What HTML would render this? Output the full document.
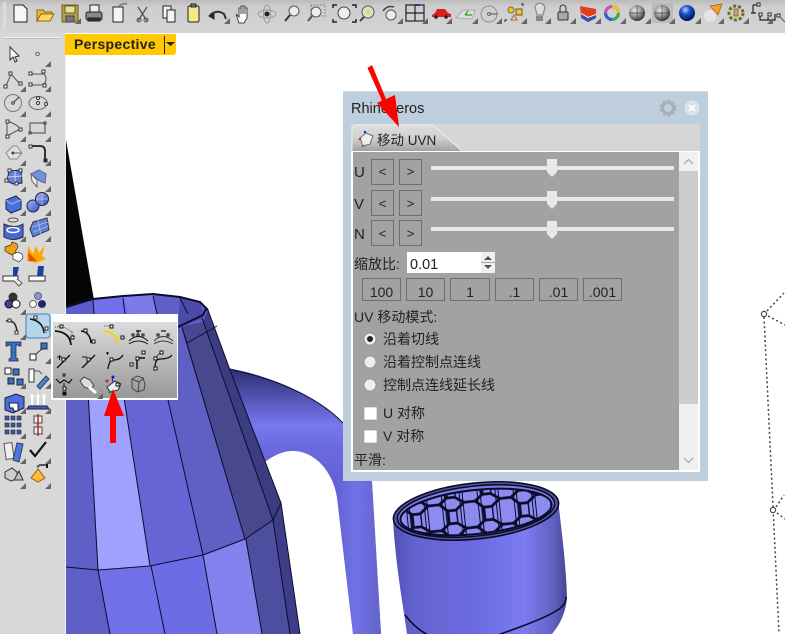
<!DOCTYPE html>
<html><head><meta charset="utf-8"><style>
html,body{margin:0;padding:0;background:#fff;width:785px;height:634px;overflow:hidden}
svg{display:block;position:absolute;left:0;top:0;filter:blur(.35px)}
text{font-family:"Liberation Sans","Noto Sans CJK SC",sans-serif;font-size:14px;fill:#222}
</style></head><body>
<svg width="785" height="634" viewBox="0 0 785 634" xmlns="http://www.w3.org/2000/svg">
<defs>
<linearGradient id="hu" x1="0" y1="370" x2="0" y2="480" gradientUnits="userSpaceOnUse"><stop offset="0" stop-color="#2f2f70"/><stop offset=".16" stop-color="#45459c"/><stop offset=".5" stop-color="#7878f0"/><stop offset=".72" stop-color="#6a6ade"/><stop offset="1" stop-color="#6262d4"/></linearGradient>
<linearGradient id="hl" x1="337" y1="0" x2="381" y2="0" gradientUnits="userSpaceOnUse"><stop offset="0" stop-color="#6262d4"/><stop offset=".4" stop-color="#7272e8"/><stop offset="1" stop-color="#6464cc"/></linearGradient>
<linearGradient id="cy" x1="394" y1="0" x2="568" y2="0" gradientUnits="userSpaceOnUse"><stop offset="0" stop-color="#5050b4"/><stop offset=".12" stop-color="#6464d0"/><stop offset=".5" stop-color="#6c6ce2"/><stop offset=".75" stop-color="#7c7cf0"/><stop offset=".92" stop-color="#6060c0"/><stop offset="1" stop-color="#44448e"/></linearGradient>
<linearGradient id="fl" x1="0" y1="0" x2="0" y2="1"><stop offset="0" stop-color="#dcdcdc"/><stop offset="1" stop-color="#989898"/></linearGradient>
<linearGradient id="tb" x1="0" y1="0" x2="0" y2="1"><stop offset="0" stop-color="#bbb"/><stop offset=".2" stop-color="#cecece"/><stop offset="1" stop-color="#d4d4d4"/></linearGradient>
<linearGradient id="tab" x1="0" y1="0" x2="0" y2="1"><stop offset="0" stop-color="#dedede"/><stop offset=".5" stop-color="#d0d0d0"/><stop offset="1" stop-color="#a2a2a2"/></linearGradient>
<radialGradient id="sph" cx=".4" cy=".35" r=".7"><stop offset="0" stop-color="#eee"/><stop offset=".5" stop-color="#999"/><stop offset="1" stop-color="#222"/></radialGradient>
<radialGradient id="bsph" cx=".4" cy=".3" r=".7"><stop offset="0" stop-color="#bcd4ff"/><stop offset=".4" stop-color="#2050d0"/><stop offset="1" stop-color="#001050"/></radialGradient>
<linearGradient id="bl" x1="0" y1="0" x2="1" y2="1"><stop offset="0" stop-color="#a8b8f8"/><stop offset="1" stop-color="#3050c0"/></linearGradient>
<pattern id="hex" width="36" height="26" patternUnits="userSpaceOnUse" patternTransform="rotate(-6) translate(4 2)"><path d="M0 7 L9 0 H20 L28 7 H36 M0 7 V20 M28 7 V20 M0 20 L9 26 M20 26 L28 20 H36 M9 26 H20" fill="none" stroke="#0a0a2a" stroke-width="2.8"/><path d="M5 0V26M8 0V26M23 0V26M26 0V26" stroke="#0a0a2a" stroke-width="1"/></pattern>
<clipPath id="elc"><ellipse cx="476" cy="512" rx="76" ry="22" transform="rotate(-6 476 512)"/></clipPath>
<path id="c" d="M6 0 L6 6 L0 6 Z" fill="#666"/>
</defs>

<rect width="785" height="634" fill="#fff"/>

<!-- black shape -->
<polygon points="66,140 94,300 66,312" fill="#050505"/>

<!-- handle -->
<path d="M228 368 C270 376 315 394 343 423 C358 438 368 458 372 482 L381 634 L353 634 L337 497 C333 472 315 451 293 451 C283 451 274 455 262 464 Z" fill="url(#hu)"/>
<path d="M337 497 C336 490 334 482 331 476 L372 482 L381 634 L353 634 Z" fill="url(#hl)"/>
<path d="M232 370 C270 378 315 394 343 423" fill="none" stroke="#15153c" stroke-width="1"/>

<!-- jug body -->
<polygon points="66,306 208,310 230,370 281,503 273,520 245,539 203,555 150,566 98,570 66,567" fill="#5f5fc8"/>
<polygon points="84,320 112,320 150,566 98,570" fill="#a0a0ff"/>
<polygon points="112,320 150,320 203,555 150,566" fill="#6565d6"/>
<polygon points="150,320 181,327 245,539 203,555" fill="#5f5fc4"/>
<polygon points="181,327 202,318 273,520 245,539" fill="#48488f"/>
<polygon points="202,318 208,310 230,370 281,503 273,520" fill="#3c3c80"/>
<polygon points="66,567 98,570 110,634 66,634" fill="#5e5ec6"/>
<polygon points="98,570 150,566 165,634 110,634" fill="#7070e8"/>
<polygon points="150,566 203,555 217,634 165,634" fill="#6c6ce4"/>
<polygon points="203,555 245,539 262,634 217,634" fill="#8282ee"/>
<polygon points="245,539 273,520 290,634 262,634" fill="#4e4ea0"/>
<polygon points="273,520 281,503 300,634 290,634" fill="#3e3e88"/>
<!-- rim -->
<polygon points="66,306 93,299 123,296 153,294 180,297 200,302 208,310 203,322 178,327 66,325" fill="#5c5ccf"/>
<polygon points="93,300 123,296 129,314 93,314" fill="#7070e8"/>
<polygon points="123,296 153,294 157,314 129,314" fill="#7c7ce8"/>
<polygon points="153,294 180,297 188,314 157,314" fill="#5f5fc8"/>
<polygon points="180,297 200,302 204,318 178,327" fill="#4c4ca8"/>
<g fill="none" stroke="#0c0c30">
<path d="M66 307 L93 299 L123 296 L153 294 L180 297 L200 302 L208 310" stroke-width="2"/>
<path d="M178 327 L203 315 L206 309" stroke-width="2"/>
<path d="M93 300L94 314M123 298L125 314M153 296L157 314M180 298L188 314"/>
<path d="M187 343 L217 326 M202 318 L273 520"/>
<path d="M182 327 L245 539"/>
<path d="M84 320 L98 570 M112 320 L150 566 M150 320 L203 555"/>
<path d="M66 567 L98 570 L150 566 L203 555 L245 539 L273 520 L281 503"/>
<path d="M98 570 L110 634 M151 566 L165 634 M203 555 L217 634 M246 539 L262 634 M273 520 L290 634"/>
<path d="M208 310 L230 370 L281 503 L300 634" stroke-width="1"/>
</g>

<!-- cylinder -->
<path d="M393 520 C396 570 404 610 407 634 L552 634 C562 622 566 610 567 597 C566 560 560 520 558 498 Z" fill="url(#cy)"/>
<ellipse cx="476" cy="511" rx="83" ry="28" transform="rotate(-6 476 511)" fill="#56569c" stroke="#0a0a2a" stroke-width="1.6"/>
<ellipse cx="476" cy="511" rx="79" ry="25" transform="rotate(-6 476 511)" fill="#7c7ce0" stroke="#0a0a2a" stroke-width="1.6"/>
<g clip-path="url(#elc)"><rect x="390" y="480" width="180" height="64" fill="#8c8cf0"/><rect x="390" y="480" width="180" height="64" fill="url(#hex)"/></g>
<ellipse cx="476" cy="512" rx="76" ry="22" transform="rotate(-6 476 512)" fill="none" stroke="#0a0a2a" stroke-width="2"/>
<path d="M405 615 C415 628 425 634 432 637 M566 597 C566 606 560 612 520 627 L495 636" fill="none" stroke="#0a0a2a" stroke-width="1.6"/>

<!-- wireframe -->
<g fill="none" stroke="#444" stroke-width="1.5" stroke-dasharray="2 2.6">
<path d="M764 317 L773 507 L779 634"/><path d="M767 311 L784 293"/><path d="M768 316 L785 325"/><path d="M776 507 L784 495"/><path d="M777 513 L785 519"/>
</g>
<circle cx="764" cy="314" r="2.6" fill="#fff" stroke="#444" stroke-width="1.2"/>
<circle cx="773" cy="510" r="2.6" fill="#fff" stroke="#444" stroke-width="1.2"/>

<!-- top toolbar -->
<rect width="785" height="33" fill="url(#tb)"/>
<rect x="3" y="2" width="3" height="27" fill="#dcdcdc"/>
<g stroke="#222" stroke-width="1" fill="#fff">
<path d="M14 5h9l4 4v13H14z" fill="#f6f6f6"/>
<path d="M37 10h6l2 2h7v3H41l-4 6z" fill="#e8b838" stroke="#8a6a10"/><path d="M37 21 l4-7h13l-4 7z" fill="#ffd860" stroke="#8a6a10"/>
<rect x="62" y="5" width="16" height="17" fill="#b0a050" stroke="#6a6020"/><rect x="65" y="6" width="10" height="7" fill="#e8e0a0" stroke="#6a6020"/><rect x="66" y="16" width="8" height="6" fill="#777" stroke="#444"/>
<rect x="86" y="12" width="16" height="8" rx="2" fill="#888"/><rect x="90" y="5" width="9" height="7" fill="#eee"/><rect x="88" y="18" width="12" height="3" fill="#333"/>
<path d="M113 7h10v15h-10z" fill="#f4f4f4"/><path d="M119 6q4-3 8-2" fill="none" stroke="#888" stroke-width="2"/>
<path d="M138 7l9 14M147 7l-9 14" fill="none" stroke="#555" stroke-width="1.3"/><circle cx="139" cy="20" r="2" fill="none" stroke="#555"/><circle cx="146" cy="20" r="2" fill="none" stroke="#555"/>
<rect x="163" y="6" width="8" height="12" fill="#f4f4f4"/><rect x="167" y="10" width="8" height="12" fill="#f4f4f4"/>
<rect x="188" y="6" width="11" height="16" rx="1.5" fill="#f4e88c"/><rect x="191" y="4" width="5" height="3" fill="#777"/>
<path d="M210 15q7-6 14-1l2 5" fill="none" stroke="#333" stroke-width="2"/><path d="M209 16l5-2v5z" fill="#333"/>
<path d="M236 14l3 3v-9h2v6 -8h2v8 -8h2v8 -6h2v10l-3 5h-5z" fill="#fff" stroke="#444"/>
<ellipse cx="267" cy="14" rx="9" ry="4" fill="none" stroke="#999"/><ellipse cx="267" cy="14" rx="3.5" ry="9" fill="none" stroke="#999"/><circle cx="267" cy="14" r="2" fill="#222"/>
<circle cx="294" cy="11" r="5" fill="#eee" stroke="#555"/><path d="M290 15l-5 6" stroke="#333" stroke-width="2"/>
<rect x="311" y="5" width="14" height="11" fill="none" stroke="#777" stroke-dasharray="1.5 1.5"/><circle cx="316" cy="12" r="5" fill="#eee" stroke="#555"/><path d="M312 16l-4 5" stroke="#555" stroke-width="2"/>
<path d="M333 8V5h4M352 5h4v3M333 19v3h4M352 22h4v-3" fill="none" stroke="#222" stroke-width="1.5"/><circle cx="344" cy="13" r="6" fill="#eee" stroke="#444"/>
<circle cx="368" cy="12" r="6" fill="#ddd" stroke="#555"/><path d="M364 17l-4 4" stroke="#444" stroke-width="2"/><circle cx="368" cy="12" r="2.5" fill="#f0d840" stroke="none"/>
<circle cx="391" cy="15" r="5" fill="#eee" stroke="#555"/><path d="M383 11q4-6 11-4" fill="none" stroke="#444" stroke-width="1.5"/>
</g>
<g stroke="#222" fill="none">
<rect x="406" y="5" width="18" height="16" stroke-width="1.2"/><path d="M406 13h18M415 5v16" stroke-width="1.2"/><rect x="414" y="4" width="6" height="2" fill="#2040a0" stroke="none"/>
<path d="M432 15l3-2 2-4h8l3 4 3 1v3h-19z" fill="#d82020" stroke="none"/><circle cx="436" cy="17" r="1.8" fill="#222" stroke="none"/><circle cx="446" cy="17" r="1.8" fill="#222" stroke="none"/>
<path d="M456 18l7-8 12 0 -3 9z" fill="#ddd" stroke="#aaa"/><path d="M465 15l3-4M465 15h7" stroke="#2a2" stroke-width="1.3"/>
<circle cx="489" cy="14" r="8" stroke="#999" stroke-width="1.2"/><circle cx="489" cy="14" r="1.5" stroke="#666"/><path d="M490 14h8" stroke="#555"/>
<circle cx="511" cy="10" r="3" fill="#f0c820" stroke="#765"/><rect x="516" y="9" width="6" height="6" fill="#f0c820" stroke="#653"/><path d="M511 20l3-5 3 5z" fill="#ddb" stroke="#a65"/>
<path d="M505 22v-2h2M521 4h2v2" stroke="#222"/>
<path d="M535 8a5 5 0 1 1 9 4l-1 4h-6l-1-4z" fill="#ddd" stroke="#888" stroke-width="1.2" transform="translate(0 -1)"/><rect x="536" y="16" width="7" height="5" fill="#888" stroke="none"/>
<rect x="558" y="12" width="10" height="8" rx="1" fill="#aaa" stroke="#333"/><path d="M560 12V8a3 3 0 0 1 6 0v4" stroke="#333"/>
<path d="M580 6l16 3 0 9 -8 4 -7-5z" fill="#e04020" stroke="none"/><path d="M581 14l7 4 8-3v3l-8 4-7-4z" fill="#3050b0" stroke="none"/><path d="M581 13l7 4 8-3v1l-8 3-7-4z" fill="#fff" stroke="none"/>
<circle cx="612" cy="13" r="6.5" stroke="#c050c0" stroke-width="3"/><path d="M612 6.500a6.500 6.500 0 0 1 6.500 6.500" stroke="#f0c020" stroke-width="3"/><path d="M618.500 13a6.500 6.500 0 0 1-6.500 6.500" stroke="#30b050" stroke-width="3"/><path d="M612 19.500a6.500 6.500 0 0 1-6.500-6.500" stroke="#3060d0" stroke-width="3"/>
<circle cx="637" cy="13" r="8" fill="url(#sph)" stroke="none"/><path d="M637 5v16M629 13h16" stroke="#444" stroke-width=".7"/>
<rect x="652" y="3" width="21" height="20" fill="#bbb" stroke="none"/>
<circle cx="662" cy="13" r="8" fill="url(#sph)" stroke="none"/><path d="M662 5v16M654 13h16" stroke="#444" stroke-width=".7"/>
<circle cx="687" cy="13" r="8" fill="url(#bsph)" stroke="none"/>
<path d="M710 6l12-2-4 11z" fill="#f0a030" stroke="#a06010" stroke-width=".7"/><circle cx="710" cy="16" r="6" fill="#e4e4e4" stroke="none"/>
<circle cx="736" cy="13" r="7" fill="#e8d080" stroke="#665" stroke-width="3" stroke-dasharray="3 2"/><rect x="734" y="9" width="4" height="7" fill="#aaa" stroke="#444" stroke-width=".6"/>
<path d="M753 5v8M751 13h5M760 5h-7M760 14v6h8v-3M775 14v6h-7M760 20h15" stroke="#222" stroke-width="1.2"/><rect x="757" y="3" width="3" height="3" fill="#fff"/><rect x="759" y="13" width="3" height="3" fill="#fff"/><rect x="768" y="13" width="3" height="3" fill="#fff"/>
<rect x="777" y="14" width="3" height="3" fill="#fff"/><path d="M780 17l5 5" stroke="#555"/>
</g>
<g>
<use href="#c" x="75" y="18"/><use href="#c" x="224" y="18"/>
<use href="#c" x="397" y="18"/><use href="#c" x="422" y="18"/><use href="#c" x="446" y="18"/><use href="#c" x="472" y="18"/><use href="#c" x="496" y="18"/><use href="#c" x="521" y="18"/><use href="#c" x="545" y="18"/><use href="#c" x="570" y="18"/><use href="#c" x="595" y="18"/><use href="#c" x="620" y="18"/><use href="#c" x="645" y="18"/><use href="#c" x="669" y="18"/><use href="#c" x="695" y="18"/><use href="#c" x="718" y="18"/><use href="#c" x="743" y="18"/><use href="#c" x="767" y="18"/>
</g>

<!-- left toolbar -->
<rect x="0" y="33" width="65" height="601" fill="#d8d8d8"/>
<rect x="65" y="33" width="1" height="601" fill="#f0f0f0"/>
<rect x="3" y="37" width="58" height="1" fill="#f0f0f0"/><rect x="3" y="38" width="58" height="1" fill="#bbb"/>

<!-- Perspective tab -->
<path d="M65 34H176V52a3 3 0 0 1-3 3H65Z" fill="#ffc800"/>
<text x="74" y="49" style="font-weight:700;font-size:14px;letter-spacing:.3px">Perspective</text>
<rect x="164" y="36" width="1" height="18" fill="#222"/>
<path d="M166 42h9l-4.500 4z" fill="#222"/>

<g fill="none" stroke="#333" stroke-width="1">
<path d="M10 47l0 13 3-3 2 5 2-1-2-4 4-1z" fill="#fff"/>
<circle cx="37.500" cy="54" r="1.800" stroke="#666"/>
<path d="M6 86L11 74L20 84" stroke="#555"/><rect x="4" y="85" width="3" height="3" fill="#fff"/><rect x="9" y="72" width="3" height="3" fill="#fff"/><rect x="19" y="82" width="3" height="3" fill="#fff"/>
<path d="M31 74h11q4 0 4 5t-5 6H31" stroke="#555"/><rect x="29" y="72" width="3" height="3" fill="#fff"/><rect x="42" y="70" width="3" height="3" fill="#fff"/><rect x="29" y="83" width="3" height="3" fill="#fff"/><rect x="43" y="84" width="3" height="3" fill="#fff"/>
<circle cx="13" cy="103" r="8.500" stroke="#777"/><path d="M13 103l6-6" stroke="#333"/><circle cx="13" cy="103" r="1.200" fill="#fff"/>
<ellipse cx="38" cy="103" rx="9" ry="6.500" stroke="#666"/><circle cx="38" cy="98" r="1.500" fill="#fff"/><circle cx="38" cy="103" r="1.500" fill="#fff"/><circle cx="46" cy="104" r="1.500" fill="#fff"/>
<path d="M7 121V136L20 129Q17 124 7 121Z" stroke="#555"/><rect x="6" y="120" width="3" height="3" fill="#fff"/><rect x="6" y="135" width="3" height="3" fill="#fff"/><rect x="19" y="128" width="3" height="3" fill="#fff"/>
<rect x="30" y="123" width="15" height="10" stroke="#444"/><rect x="29" y="132" width="2" height="2" fill="#fff"/><rect x="44" y="122" width="2" height="2" fill="#fff"/>
<path d="M13 146l-7 7 0 0 4 6h7l5-6-5-7z" stroke="#888" fill="#e0e0e0"/><circle cx="13" cy="153" r="1" fill="#333"/><path d="M13 153h8" stroke="#666"/>
<path d="M31 146h9q5 0 5 5v9" stroke="#222" stroke-width="1.800"/><rect x="29" y="145" width="3" height="3" fill="#fff"/><rect x="44" y="159" width="3" height="3" fill="#222"/>
<path d="M9 171l12-1 1 13-9 1-6-3z" fill="#6080e0" stroke="#223"/><path d="M15 171v12M8 177l14-1" stroke="#cde"/><rect x="8" y="169" width="3" height="3" fill="#fff"/><rect x="19" y="169" width="3" height="3" fill="#fff"/><rect x="5" y="179" width="3" height="3" fill="#fff"/><rect x="15" y="182" width="3" height="3" fill="#fff"/>
<path d="M31 174l8-4 7 4-1 9-5-2-3-2z" fill="#7090e8" stroke="#667"/><path d="M31 174l6 6v7l-5-6z" fill="#f0f0f0" stroke="#667"/>
<path d="M6 200l10-4 5 4v9l-10 4-5-4z" fill="#4870e0" stroke="#223"/><path d="M6 200l5 4 10-4" stroke="#a0b8f0"/>
<circle cx="33" cy="206" r="6" fill="url(#bl)" stroke="#223"/><circle cx="42" cy="199" r="6.500" fill="url(#bl)" stroke="#223"/><path d="M42 193v12M36 199h12" stroke="#dde" stroke-width=".6"/>
<path d="M4 224v13q9 5 19 0v-13q-9 5-19 0z" fill="#4868d8" stroke="#223"/><ellipse cx="13" cy="220" rx="5" ry="2" stroke="#555"/><ellipse cx="13" cy="230" rx="6" ry="2.500" stroke="#fff" stroke-width="1.500"/>
<path d="M33 222l14-4 2 12-16 7-3-8z" fill="#6080d8" stroke="#334"/><path d="M38 220l3 15M32 227l16-5M34 232l14-6" stroke="#cde" stroke-width=".6"/>
<path d="M5 247l6-2 1-3 5 2 1 3-3 5 2 3-5 0-4-2-3-2z" fill="#f0a010" stroke="#333" stroke-width=".7"/><path d="M13 254l5-2 4 2 1 4-4 4-6-3z" fill="#fff" stroke="#333" stroke-width=".7"/>
<path d="M28 246l5 8 3-8 3 7 6-8-3 11 4 3-10 4-9-2z" fill="#ffa500" stroke="none"/><path d="M28 252l1 9h8z" fill="#e05000" stroke="none"/>
<rect x="3" y="276" width="15" height="5" fill="#fff" stroke="#333"/><path d="M13 267h6l-2 9h-4z" fill="#2040a0" stroke="none"/><path d="M14 281l5 5 3-3-5-4" fill="#eee" stroke="#555"/>
<rect x="29" y="276" width="16" height="5" fill="#fff" stroke="#333"/><path d="M38 266h6l-1 10h-6z" fill="#2040a0" stroke="none"/>
<circle cx="13" cy="297" r="4" fill="#333"/><circle cx="9" cy="304" r="4" fill="#4040a0" stroke="#111"/><circle cx="16" cy="304" r="4" fill="#fff" stroke="#111"/>
<circle cx="38" cy="296" r="3.500" fill="#9090e0" stroke="#667"/><circle cx="33" cy="304" r="3.500" fill="#fff" stroke="#667"/><circle cx="42" cy="304" r="3.500" fill="#202080" stroke="#334"/>
<path d="M6 321q10-2 11 11" stroke="#222" stroke-width="1.500"/><rect x="8" y="319" width="3" height="3" fill="#fff"/><rect x="15" y="331" width="3" height="3" fill="#fff"/>
<rect x="26" y="314" width="24" height="24" rx="3" fill="#b4d6e8" stroke="#5a94bc" stroke-width="1.300"/><path d="M30 319q13 2 14 14" stroke="#111" stroke-width="1.500"/><path d="M31 319h5M46 328v5" stroke="#333" stroke-dasharray="1 1"/><rect x="34" y="316" width="3" height="3" fill="#fff"/><rect x="45" y="327" width="3" height="3" fill="#fff"/>
<path d="M6 342h15v4h-2l-1-1h-2v13l2 1v2H9v-2l2-1V345H9l-1 1H6z" fill="#3a70c0" stroke="#123" stroke-width=".7"/>
<rect x="30" y="354" width="6" height="6" fill="#fff" stroke="#222"/><rect x="41" y="343" width="6" height="6" fill="#3a70d0" stroke="#223"/><path d="M36 354l6-5" stroke="#333"/>
<rect x="5" y="368" width="6" height="6" fill="#fff" stroke="#222"/><rect x="13" y="369" width="6" height="6" fill="#3a70c0" stroke="#223"/><rect x="8" y="378" width="6" height="6" fill="#3a70c0" stroke="#223"/><rect x="17" y="379" width="6" height="6" fill="#3a70c0" stroke="#223"/>
<rect x="29" y="369" width="5" height="13" fill="#fff" stroke="#333"/><path d="M37 386l9-10 3 3-9 10z" fill="#5080d8" stroke="#345"/><path d="M34 371h5l3 3" stroke="#555"/>
<path d="M5 398l11-4 8 3 0 11-11 5-8-3z" fill="#4870e0" stroke="#223"/><path d="M9 403h9v8h-4l-1-3h-3z" fill="#fff" stroke="#223"/>
<path d="M29 406h18l2 3H27z" fill="#4060c0" stroke="#223"/><path d="M32 405v-9M38 405v-9M44 405v-9" stroke="#fff" stroke-width="2"/><path d="M30 397l2-3 2 3M36 397l2-3 2 3M42 397l2-3 2 3" stroke="#fff"/>
<g fill="#3a5ca8" stroke="#223" stroke-width=".6"><rect x="5" y="416" width="4" height="4"/><rect x="11" y="416" width="4" height="4"/><rect x="17" y="416" width="4" height="4"/><rect x="5" y="423" width="4" height="4"/><rect x="11" y="423" width="4" height="4"/><rect x="17" y="423" width="4" height="4"/><rect x="5" y="430" width="4" height="4"/><rect x="11" y="430" width="4" height="4"/><rect x="17" y="430" width="4" height="4"/></g>
<rect x="34" y="416" width="8" height="7" fill="#eee" stroke="#444"/><rect x="34" y="427" width="8" height="7" fill="#eee" stroke="#444"/><path d="M38 414v22" stroke="#c02020" stroke-width="1.500"/>
<rect x="5" y="443" width="8" height="16" fill="#eee" stroke="#555" transform="rotate(-8 9 451)"/><path d="M13 460l4-17 6 1-4 18z" fill="#4878e0" stroke="#345"/>
<path d="M30 450l5 6 11-14" stroke="#111" stroke-width="2.200"/>
<path d="M5 472l7-4 5 4v7l-6 2-6-3z" fill="#ccc" stroke="#333"/><path d="M14 480l5-9 4 9z" fill="#bbb" stroke="#333"/>
<path d="M31 478l7-9 7 9-7 4z" fill="#ffb840" stroke="#a06000"/><path d="M37 467l3-2h8" stroke="#555" stroke-width="2"/><rect x="46" y="464" width="2" height="4" fill="#111" stroke="none"/>
</g>
<g>
<use href="#c" x="45" y="61"/><use href="#c" x="20" y="86"/><use href="#c" x="45" y="86"/><use href="#c" x="20" y="111"/><use href="#c" x="45" y="111"/><use href="#c" x="20" y="136"/><use href="#c" x="45" y="136"/><use href="#c" x="20" y="160"/><use href="#c" x="45" y="160"/><use href="#c" x="20" y="186"/><use href="#c" x="45" y="186"/><use href="#c" x="20" y="210"/><use href="#c" x="45" y="210"/><use href="#c" x="20" y="236"/><use href="#c" x="45" y="236"/><use href="#c" x="20" y="309"/><use href="#c" x="20" y="334"/><use href="#c" x="45" y="358"/><use href="#c" x="20" y="383"/><use href="#c" x="45" y="383"/><use href="#c" x="20" y="408"/><use href="#c" x="45" y="408"/><use href="#c" x="20" y="433"/><use href="#c" x="45" y="433"/><use href="#c" x="20" y="458"/><use href="#c" x="45" y="458"/><use href="#c" x="20" y="483"/><use href="#c" x="45" y="483"/>
</g>

<!-- flyout -->
<rect x="51" y="314" width="127" height="86" fill="#fff"/>
<rect x="53" y="322" width="124" height="76" fill="url(#fl)"/>
<g fill="none" stroke="#111" stroke-width="1">
<path d="M55 331q15 1 16 14" stroke-width="1.800"/><path d="M55 327h5M72 331v6" stroke="#444" stroke-dasharray="1 1"/><path d="M58 326q14 2 16 12" stroke="#666" stroke-dasharray="1 1"/><rect x="60" y="325" width="3" height="3" fill="#eee"/><rect x="71" y="336" width="3" height="3" fill="#eee"/>
<path d="M81 331q9 1 10 12" stroke-width="1.500"/><rect x="84" y="329" width="3" height="3" fill="#fff"/><rect x="92" y="340" width="3" height="3" fill="#fff"/>
<path d="M104 331q13 2 14 13" stroke="#f0d800" stroke-width="2"/><path d="M104 326h6" stroke="#555" stroke-dasharray="1 1"/><rect x="110" y="325" width="3" height="3" fill="#eee"/><rect x="121" y="336" width="3" height="3" fill="#eee"/>
<path d="M129 341q9-9 19 0M129 344q9-6 19 0"/><rect x="132" y="334" width="2" height="2" fill="#fff"/><rect x="137" y="334" width="2" height="2" fill="#fff"/><rect x="142" y="334" width="2" height="2" fill="#fff"/><path d="M138 330v3M136 331h5" stroke-width="1.200"/>
<path d="M154 341q9-9 19 0M154 344q9-6 19 0" stroke="#333"/><rect x="157" y="334" width="2" height="2" fill="#fff"/><rect x="167" y="334" width="2" height="2" fill="#fff"/><path d="M161 331h5" stroke-width="1.200"/>
<path d="M57 368l13-13" stroke-width="1.300"/><rect x="62" y="358" width="3" height="3" fill="#fff"/><path d="M57 357h5M59.500 355v5"/>
<path d="M82 368l13-13" stroke-width="1.300"/><rect x="87" y="358" width="3" height="3" fill="#fff"/><path d="M82 357h5"/>
<path d="M108 369q1-9 6-9q6 0 9-5" stroke-width="1.300"/><rect x="110" y="358" width="3" height="3" fill="#fff"/><path d="M106 353h3M107.500 352v3"/>
<rect x="130" y="363" width="3" height="3" fill="#fff"/><rect x="136" y="357" width="3" height="3" fill="#fff"/><path d="M137 360v9M139 358h6" stroke-width="1.500"/><rect x="142" y="351" width="3" height="3" fill="#fff"/>
<path d="M155 368q0-9 5-9q9 0 12-4" stroke-width="1.200"/><path d="M155 358l6-6" stroke="#555"/><rect x="154" y="357" width="3" height="3" fill="#fff"/><rect x="154" y="367" width="3" height="3" fill="#fff"/><rect x="160" y="351" width="3" height="3" fill="#fff"/>
<path d="M56 379l4 4 4-3 5 3 3-4" stroke-width="1.200"/><rect x="63" y="374" width="2" height="2" fill="#fff"/><rect x="63" y="387" width="3" height="3" fill="#fff"/><rect x="63" y="392" width="3" height="3" fill="#111"/><path d="M64 383v4"/>
<path d="M80 381l4-4 6 3 4 6-4 3-6-2z" fill="#ddd" stroke="#444"/><path d="M90 386l7 6-2 2-7-6z" fill="#fff" stroke="none"/>
<path d="M107 387l8-6 6 3-3 6-8 2z" fill="#eee" stroke="#333"/><path d="M113 382l-1-5" stroke="#0020d0"/><circle cx="113" cy="377" r="1.500" fill="#0020d0" stroke="none"/><circle cx="107" cy="381" r="1.500" fill="#d02020" stroke="none"/><circle cx="110" cy="392" r="1.500" fill="#109010" stroke="none"/><rect x="116" y="383" width="3" height="3" fill="#fff"/>
<path d="M132 379l5-3 6 2 2 6-1 6-7 2-5-4zM132 379l7 3 5-4M139 382l-1 10" stroke="#444"/>
</g>
<use href="#c" x="97" y="393"/>

<!-- red arrow 2 -->
<polygon points="113,389 124,416 116,416 116,443 110,443 110,416 104,416" fill="#ff0000"/>

<!-- panel -->
<rect x="343" y="91" width="365" height="390" fill="#bfcedc"/>
<rect x="343" y="91" width="365" height="1" fill="#d0dbe6"/>
<text x="351" y="113" style="font-size:14.500px">Rhinoceros</text>
<circle cx="668" cy="108" r="5.500" fill="none" stroke="#a6aeb6" stroke-width="3"/><circle cx="668" cy="108" r="7.500" fill="none" stroke="#a6aeb6" stroke-width="1.800" stroke-dasharray="2.500 2.400"/>
<circle cx="692" cy="108" r="7.500" fill="#dbe3ea"/><path d="M689 105l6 6M695 105l-6 6" stroke="#fff" stroke-width="1.800"/>

<rect x="351" y="124" width="349" height="348" fill="#fff"/>
<rect x="351" y="124" width="349" height="27" fill="#d6d6d6"/>
<path d="M352 151V130q0-5 5-5H433L462 151Z" fill="url(#tab)"/>
<path d="M352 151V130q0-5 5-5H433L462 151" fill="none" stroke="#eee"/>
<rect x="353" y="152" width="326" height="318" fill="#a2a2a2"/>
<rect x="679" y="152" width="19" height="318" fill="#f0f0f0"/>
<rect x="679" y="171" width="19" height="233" fill="#cdcdcd"/>
<path d="M684 164l4.500-4.500 4.500 4.500M684 458l4.500 4.500 4.500-4.500" fill="none" stroke="#aaa" stroke-width="1.300"/>

<!-- tab content -->
<g>
<path d="M360 138l6-5 7 3-3 8-7 2z" fill="#eee" stroke="#555" stroke-width=".8"/><circle cx="365" cy="132" r="1.300" fill="#2040d0"/><circle cx="360" cy="139" r="1.300" fill="#d03030"/><circle cx="363" cy="146" r="1.300" fill="#30a030"/>
<text x="377" y="145" style="font-size:13.500px">移动 UVN</text>
</g>
<text x="354" y="177" style="font-size:15px">U</text>
<text x="354" y="209" style="font-size:15px">V</text>
<text x="354" y="239" style="font-size:15px">N</text>
<g fill="#a2a2a2" stroke="#6e6e6e" stroke-width="1">
<rect x="371.500" y="159.500" width="22" height="25"/><rect x="399.500" y="159.500" width="22" height="25"/>
<rect x="371.500" y="190.500" width="22" height="25"/><rect x="399.500" y="190.500" width="22" height="25"/>
<rect x="371.500" y="220.500" width="22" height="25"/><rect x="399.500" y="220.500" width="22" height="25"/>
<rect x="362.500" y="278.500" width="38" height="22"/><rect x="406.500" y="278.500" width="38" height="22"/><rect x="450.500" y="278.500" width="39" height="22"/><rect x="495.500" y="278.500" width="38" height="22"/><rect x="539.500" y="278.500" width="38" height="22"/><rect x="583.500" y="278.500" width="38" height="22"/>
</g>
<g>
<text x="382.500" y="176" text-anchor="middle" style="font-size:13px">&lt;</text><text x="410.500" y="176" text-anchor="middle" style="font-size:13px">&gt;</text>
<text x="382.500" y="208" text-anchor="middle" style="font-size:13px">&lt;</text><text x="410.500" y="208" text-anchor="middle" style="font-size:13px">&gt;</text>
<text x="382.500" y="238" text-anchor="middle" style="font-size:13px">&lt;</text><text x="410.500" y="238" text-anchor="middle" style="font-size:13px">&gt;</text>
<text x="381.500" y="297" text-anchor="middle">100</text><text x="425.500" y="297" text-anchor="middle">10</text><text x="470" y="297" text-anchor="middle">1</text><text x="514.500" y="297" text-anchor="middle">.1</text><text x="558.500" y="297" text-anchor="middle">.01</text><text x="602.500" y="297" text-anchor="middle">.001</text>
</g>
<g fill="#e8e8e8">
<rect x="431" y="166" width="243" height="4"/><rect x="431" y="197" width="243" height="4"/><rect x="431" y="227" width="243" height="4"/>
<path d="M547 159h10v13l-5 5-5-5z"/><path d="M547 191h10v13l-5 5-5-5z"/><path d="M547 221h10v13l-5 5-5-5z"/>
</g>
<text x="354" y="269">缩放比:</text>
<rect x="407" y="252" width="74" height="21" fill="#fff"/>
<rect x="481" y="252" width="14" height="21" fill="#efefef"/><path d="M484 260l4-4 4 4zM484 265l4 4 4-4z" fill="#555"/><rect x="481" y="262" width="14" height="1" fill="#aaa"/>
<text x="410" y="269" style="font-size:14.500px">0.01</text>
<text x="354" y="322">UV 移动模式:</text>
<g fill="#eee" stroke="#888" stroke-width=".8"><circle cx="370" cy="339" r="6"/><circle cx="370" cy="362" r="6"/><circle cx="370" cy="385" r="6"/></g>
<circle cx="370" cy="339" r="3" fill="#222"/>
<text x="383" y="344">沿着切线</text>
<text x="383" y="367">沿着控制点连线</text>
<text x="383" y="390">控制点连线延长线</text>
<rect x="364" y="407" width="13" height="13" fill="#fff" stroke="#999" stroke-width=".6"/>
<rect x="364" y="430" width="13" height="13" fill="#fff" stroke="#999" stroke-width=".6"/>
<text x="383" y="418">U 对称</text>
<text x="383" y="441">V 对称</text>
<text x="354" y="465">平滑:</text>

<!-- red arrow 1 -->
<polygon points="367.500,68 372,65 386,99 395,95 399,127 377,103 382,100.500" fill="#ff0000"/>
</svg>
</body></html>
